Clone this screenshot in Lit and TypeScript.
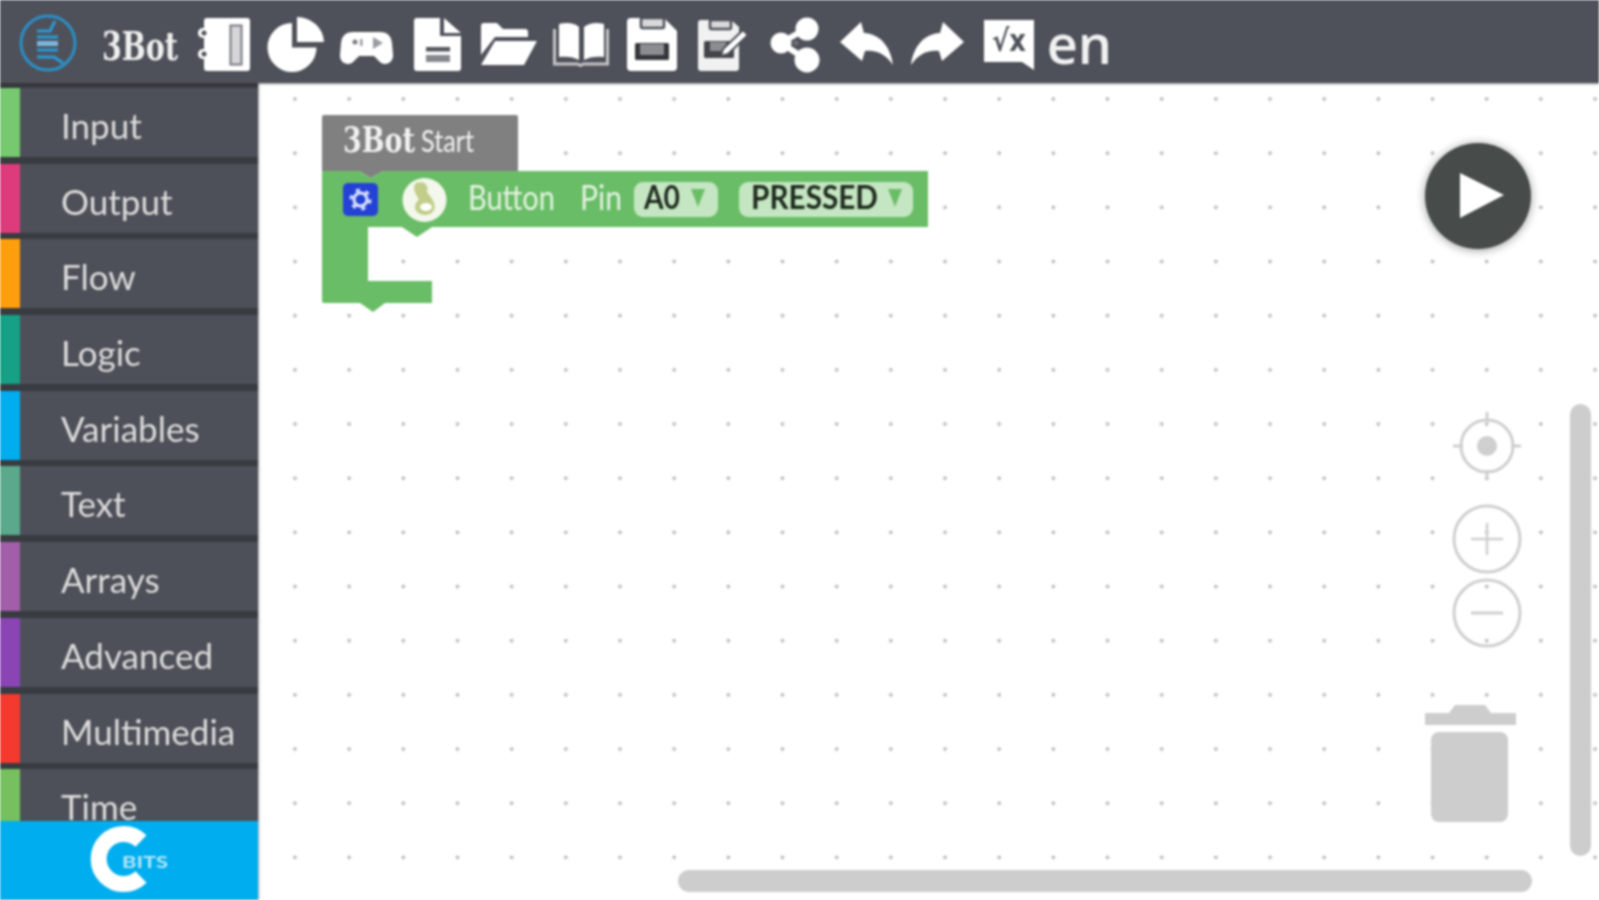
import { LitElement, html, css, svg } from "lit";
import { customElement } from "lit/decorators.js";

const categories = [
  ["Input", "#76c96f"], ["Output", "#de3b7d"], ["Flow", "#ff9e0c"], ["Logic", "#16a085"],
  ["Variables", "#00aeef"], ["Text", "#5aa98c"], ["Arrays", "#a25ea8"], ["Advanced", "#8a44b4"],
  ["Multimedia", "#f4392e"], ["Time", "#76c05f"],
];
const D = "#4d5058";
// every icon is drawn in a 56-tall box whose top lies at y=17 of the page
const icons = [
  // notebook
  { w: 52, body: svg`<path fill="#fff" d="M6 4a3 3 0 0 1 3-3h40a3 3 0 0 1 3 3v47a3 3 0 0 1-3 3H9a3 3 0 0 1-3-3z"/>
    <circle cx="5" cy="16" r="5" fill="#fff"/><circle cx="5" cy="37" r="5" fill="#fff"/>
    <circle cx="6" cy="16" r="2.500" fill="${D}"/><circle cx="6" cy="37" r="2.500" fill="${D}"/>
    <rect x="32.500" y="8.500" width="11" height="39" fill="#d6d6d8" stroke="#77797f" stroke-width="2"/>` },
  // pie
  { w: 57, body: svg`<path fill="#fff" d="M25 6a24.500 24.500 0 1 0 24.500 24.500H25z"/><path fill="#fff" d="M30 0a27 26 0 0 1 27 25H30z"/>` },
  // gamepad
  { w: 53, body: svg`<path fill="#fff" d="M13 15h27c8 0 11 4 12 11l1 12c.5 7-7 12-13 7l-6-6H19l-6 6c-6 5-13.500 0-13-7l1-12c1-7 4-11 12-11z"/>
    <circle cx="15" cy="25" r="2.500" fill="#777981"/><rect x="20" y="22" width="2.500" height="7" fill="#9a9ca1"/><path d="M33 20l10 6-10 6z" fill="#9a9ca1"/>` },
  // file
  { w: 47, body: svg`<path fill="#fff" d="M3 1h23v18h21v32a3 3 0 0 1-3 3H3a3 3 0 0 1-3-3V4a3 3 0 0 1 3-3z"/><path fill="#fff" d="M30 1l17 15H30z"/>
    <rect x="12" y="30" width="24" height="4.500" fill="#55575e"/><rect x="12" y="38" width="24" height="7" fill="#86888d"/>` },
  // folder open
  { w: 56, body: svg`<path fill="#fff" d="M0 9a3 3 0 0 1 3-3h13l6 6h22a3 3 0 0 1 3 3v5H14L0 38z"/><path fill="#fff" d="M14 24h42L43 48H0z"/>` },
  // book
  { w: 56, body: svg`<path fill="#fff" d="M6 7c8-2 16-1 20 3v33c-5-3-12-4-20-3z"/><path fill="#fff" d="M31 10c5-4 12-5 20-3v33c-8-1-15 0-20 3z"/>
    <path d="M1.500 12v35h23l3 1.500 3-1.500h24V12" fill="none" stroke="#c4c5c7" stroke-width="3"/>` },
  // floppy
  { w: 50, body: svg`<path fill="#fff" d="M4 1h33l13 13v36a4 4 0 0 1-4 4H4a4 4 0 0 1-4-4V5a4 4 0 0 1 4-4z"/>
    <rect x="14" y="1" width="23" height="10" rx="1.500" fill="#d9d9db" stroke="${D}" stroke-width="2.500"/>
    <rect x="8" y="26" width="34" height="17" rx="1.500" fill="#34363b"/><rect x="13" y="27" width="24" height="11" fill="#8b8d91"/>` },
  // edit
  { w: 50, body: svg`<path fill="#f1f1f2" d="M3 3h30l8 7v41a3 3 0 0 1-3 3H3a3 3 0 0 1-3-3V6a3 3 0 0 1 3-3z"/>
    <rect x="12" y="3" width="21" height="9" rx="1.500" fill="#d9d9db" stroke="${D}" stroke-width="2.500"/>
    <rect x="6" y="24" width="30" height="17" rx="1.500" fill="#43454b"/><rect x="12" y="25" width="16" height="9" fill="#8b8d91"/>
    <path d="M25 32l20-19 5 5-20 19-7 2z" fill="#fff" stroke="${D}" stroke-width="2"/>` },
  // share
  { w: 47, body: svg`<path stroke="#fff" stroke-width="6" d="M10 26L36 11M10 26l26 17"/><circle cx="36" cy="12" r="11.500" fill="#fff"/><circle cx="36" cy="43" r="12.500" fill="#fff"/><circle cx="10" cy="26" r="10.500" fill="#fff"/><circle cx="25" cy="26" r="2.500" fill="#6f7177"/>` },
  // undo
  { w: 53, body: svg`<path fill="#fff" d="M0 25L21 5l3 11c18 1 27 16 29 32-7-10-15-15-28-14l-3 10z"/>` },
  // redo
  { w: 53, body: svg`<path fill="#fff" d="M53 25L32 5l-3 11C11 17 2 32 0 48c7-10 15-15 28-14l3 10z"/>` },
  // formula bubble
  { w: 50, body: svg`<path fill="#fff" d="M0 3h50v50l-12-8H0z"/><text x="25" y="34" class="fx" text-anchor="middle" textLength="34" lengthAdjust="spacingAndGlyphs">√x</text>` },
];

@customElement("app-root")
export class AppRoot extends LitElement {
  static styles = css`
    :host { display: block; width: 1599px; height: 900px; overflow: hidden; font-family: Lato, "Liberation Sans", sans-serif; background: #fff; filter: blur(1px); }
    .app { display: grid; grid-template-rows: 83px 1fr; width: 1599px; height: 900px; }
    .bar { display: flex; align-items: flex-start; background: #4e5159; padding: 17px 0 0 19px; box-shadow: 0 1px 2px #3338; z-index: 2; }
    .logo { width: 58px; height: 56px; flex: none; overflow: visible; }
    .brand { display: block; width: 86px; height: 56px; flex: none; margin: 0 0 0 25px; overflow: visible; }
    .brand text { fill: #f0f0f0; font: 700 40px "DejaVu Serif", serif; }
    .slot { width: 71.4px; flex: none; display: flex; justify-content: center; }
    .slot svg { display: block; overflow: visible; }
    .fx { font: 700 30px "DejaVu Sans", sans-serif; fill: #4e5159; }
    .lang { font: 600 54px/56px "Open Sans", sans-serif; color: #f1f1f1; margin: -2px 0 0 2px; }
    .main { display: grid; grid-template-columns: 258px 1fr; min-height: 0; }
    .side { display: flex; flex-direction: column; min-height: 0; background: #383b40; box-shadow: 1px 0 2px #5558; z-index: 1; }
    .list { flex: 1; min-height: 0; overflow: hidden; padding-top: 5px; display: flex; flex-direction: column; gap: 6.7px; }
    .row { flex: none; height: 69px; display: flex; align-items: center; background: #4d5058; }
    .swatch { width: 20px; align-self: stretch; }
    .label { margin-left: 41px; font-size: 35px; color: #dcdcdc; padding-top: 5px; }
    .foot { height: 79px; flex: none; background: #00aeef; }
    .foot svg { display: block; width: 258px; height: 79px; }
    .bits { font: 700 17px Lato, sans-serif; fill: #b9e6fa; }
    .ws { display: block; width: 1341px; height: 817px; }
    .hat { font: 700 36px "DejaVu Serif", serif; fill: #f2f2f2; }
    .hat2 { font: 400 30px Lato, sans-serif; fill: #f2f2f2; }
    .bl { font: 400 34px Lato, sans-serif; fill: #e3f3e1; }
    .val { font: 700 33px Lato, sans-serif; fill: #1e2b1e; }
  `;

  render() {
    return html`<div class="app">
      <header class="bar">
        <svg class="logo" viewBox="0 0 58 56">
          <circle cx="29" cy="26" r="27" fill="none" stroke="#2b8fc8" stroke-width="3"/>
          <path d="M18 14h13l5-10M18 40h17l9 6" fill="none" stroke="#2b9ad8" stroke-width="3"/>
          <path d="M18 20h21M18 33h21" stroke="#2b9ad8" stroke-width="3"/>
          <path d="M18 26.500h21" stroke="#7bb7dd" stroke-width="5"/>
        </svg>
        <svg class="brand" viewBox="0 0 86 56"><text x="0" y="43" textLength="76" lengthAdjust="spacingAndGlyphs">3Bot</text></svg>
        ${icons.map(i => html`<div class="slot"><svg width=${i.w} height="56" viewBox="0 0 ${i.w} 56">${i.body}</svg></div>`)}
        <span class="lang">en</span>
      </header>
      <div class="main">
        <nav class="side">
          <div class="list">
            ${categories.map(([n, c]) => html`<div class="row"><span class="swatch" style="background:${c}"></span><span class="label">${n}</span></div>`)}
          </div>
          <div class="foot">
            <svg viewBox="0 821 258 79">
              <path d="M141 841A25 25 0 1 0 141 877" fill="none" stroke="#fff" stroke-width="16"/>
              <text x="122" y="868" class="bits" textLength="46" lengthAdjust="spacingAndGlyphs">BITS</text>
            </svg>
          </div>
        </nav>
        <svg class="ws" viewBox="258 83 1341 817">
          <defs>
            <pattern id="dots" x="268" y="72" width="54.17" height="54.17" patternUnits="userSpaceOnUse">
              <path d="M27 25v4M25 27h4" stroke="#a8a8a8" stroke-width="1.300"/>
            </pattern>
          </defs>
          <rect x="258" y="83" width="1341" height="817" fill="url(#dots)"/>

          <path fill="#808080" d="M322 117a2 2 0 0 1 2-2h192a2 2 0 0 1 2 2v54H383l-12 7-12-7h-37z"/>
          <text x="343" y="152" class="hat" textLength="72" lengthAdjust="spacingAndGlyphs">3Bot</text>
          <text x="421" y="152" class="hat2" textLength="53" lengthAdjust="spacingAndGlyphs">Start</text>

          <path fill="#69bd66" d="M322 171h37l12 7 12-7h545v56H432l-15 10-15-10h-34v54h64v22h-47l-12 9-13-9h-36a2 2 0 0 1-2-2z"/>
          <rect x="343" y="183" width="35" height="33" rx="5" fill="#2442d6"/>
          <circle cx="360.500" cy="199.500" r="6.500" fill="none" stroke="#dfe6ff" stroke-width="3"/>
          <circle cx="360.500" cy="199.500" r="9.500" fill="none" stroke="#dfe6ff" stroke-width="3" stroke-dasharray="4 5.950"/>
          <circle cx="424.500" cy="200" r="22" fill="#f4f7ec"/>
          <path fill="#c1cd88" d="M416 183c9-3 13 3 11 9l5 7c5 7 3 15-6 16-9 0-13-6-10-12l3-4c-4-5-7-12-3-16z"/>
          <ellipse cx="426" cy="207" rx="6" ry="4" fill="#fff"/>
          <text x="468" y="210" class="bl" textLength="87" lengthAdjust="spacingAndGlyphs">Button</text>
          <text x="580" y="210" class="bl" textLength="42" lengthAdjust="spacingAndGlyphs">Pin</text>
          <rect x="634" y="182" width="84" height="35" rx="9" fill="#c5e6c2"/>
          <text x="644" y="209" class="val" textLength="36" lengthAdjust="spacingAndGlyphs">A0</text>
          <path d="M691 189h14l-7 18z" fill="#69bd66"/>
          <rect x="739" y="182" width="174" height="35" rx="9" fill="#c5e6c2"/>
          <text x="751" y="209" class="val" textLength="127" lengthAdjust="spacingAndGlyphs">PRESSED</text>
          <path d="M888 189h14l-7 18z" fill="#69bd66"/>

          <circle cx="1478" cy="196" r="53" fill="#474c4a" style="filter:drop-shadow(0 1px 5px #0006)"/>
          <path d="M1460 173l44 22-44 23z" fill="#fff"/>

          <g fill="none" stroke="#cfcfcf" stroke-width="3">
            <circle cx="1487" cy="446" r="26"/>
            <path d="M1487 412v10M1487 470v10M1453 446h10M1511 446h10"/>
            <circle cx="1487" cy="539" r="33"/>
            <path d="M1471 539h32M1487 523v32" stroke-width="2.500"/>
            <circle cx="1487" cy="613" r="33"/>
            <path d="M1471 613h32" stroke-width="3"/>
          </g>
          <circle cx="1487" cy="446" r="10" fill="#cfcfcf"/>
          <g fill="#cdcdcd">
            <path d="M1425 713h24l6-8h30l6 8h25v12h-91z"/>
            <rect x="1431" y="732" width="77" height="90" rx="8"/>
            <rect x="1570" y="404" width="21" height="452" rx="10.500"/>
            <rect x="678" y="870" width="854" height="22" rx="11"/>
          </g>
        </svg>
      </div>
    </div>`;
  }
}
